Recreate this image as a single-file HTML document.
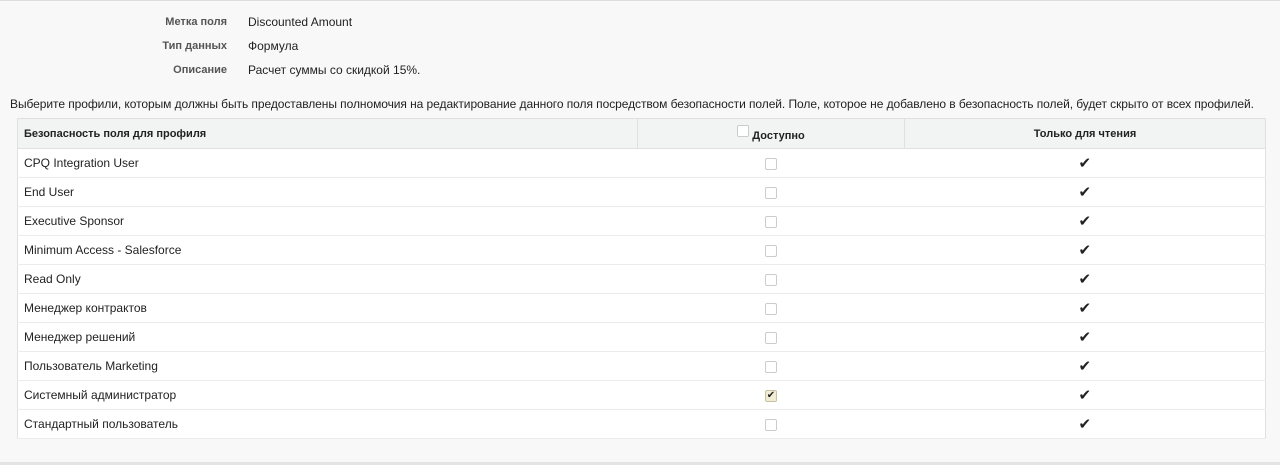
<!DOCTYPE html>
<html><head><meta charset="utf-8"><style>
body{margin:0;width:1280px;height:465px;background:#f8f8f8;font-family:"Liberation Sans",Arial,sans-serif;color:#222;position:relative;overflow:hidden}
.top{position:absolute;left:0;top:0;width:1280px;height:1px;background:#ddd}
.bot{position:absolute;left:0;top:462px;width:1280px;height:3px;background:#e4e4e4}
.lbl{position:absolute;width:227px;text-align:right;font-size:11px;font-weight:bold;color:#555}
.val{position:absolute;left:248px;font-size:12px;color:#222}
.desc{position:absolute;left:10px;top:97px;font-size:12px;letter-spacing:-0.065px;color:#222;white-space:nowrap}
table{position:absolute;left:17px;top:118px;width:1249px;border-collapse:collapse;background:#fff;border:1px solid #e0e0e0}
th{background:#f2f3f3;height:29px;font-size:11px;font-weight:bold;text-align:left;padding:0 0 0 6px;border-bottom:1px solid #e0e0e0}
th+th{border-left:1px solid #e0e0e0;text-align:center;padding:0}
td{height:28px;border-bottom:1px solid #ececec;font-size:12px;padding:0 0 0 6px}
td+td{text-align:center;padding:0}
.cb{display:inline-block;width:10px;height:10px;border:1px solid #ccc;border-radius:2px;vertical-align:middle;background:#fff}
.cb.on{background:#f1ecd6;border-color:#c9c2a0;font-size:10px;line-height:10px;text-align:center}
.ck{font-size:15px;vertical-align:middle}
</style></head><body>
<div class="top"></div>
<div class="lbl" style="top:16px">Метка поля</div><div class="val" style="top:15px">Discounted Amount</div>
<div class="lbl" style="top:40px">Тип данных</div><div class="val" style="top:39px">Формула</div>
<div class="lbl" style="top:64px">Описание</div><div class="val" style="top:63px">Расчет суммы со скидкой 15%.</div>
<div class="desc">Выберите профили, которым должны быть предоставлены полномочия на редактирование данного поля посредством безопасности полей. Поле, которое не добавлено в безопасность полей, будет скрыто от всех профилей.</div>
<table>
<tr><th style="width:613px">Безопасность поля для профиля</th><th style="width:266px"><span style="position:relative;top:3px"><span class="cb" style="position:relative;top:-6px"></span> Доступно</span></th><th>Только для чтения</th></tr>
<tr><td>CPQ Integration User</td><td><span class="cb"></span></td><td><span class="ck">✔</span></td></tr>
<tr><td>End User</td><td><span class="cb"></span></td><td><span class="ck">✔</span></td></tr>
<tr><td>Executive Sponsor</td><td><span class="cb"></span></td><td><span class="ck">✔</span></td></tr>
<tr><td>Minimum Access - Salesforce</td><td><span class="cb"></span></td><td><span class="ck">✔</span></td></tr>
<tr><td>Read Only</td><td><span class="cb"></span></td><td><span class="ck">✔</span></td></tr>
<tr><td>Менеджер контрактов</td><td><span class="cb"></span></td><td><span class="ck">✔</span></td></tr>
<tr><td>Менеджер решений</td><td><span class="cb"></span></td><td><span class="ck">✔</span></td></tr>
<tr><td>Пользователь Marketing</td><td><span class="cb"></span></td><td><span class="ck">✔</span></td></tr>
<tr><td>Системный администратор</td><td><span class="cb on">✔</span></td><td><span class="ck">✔</span></td></tr>
<tr><td>Стандартный пользователь</td><td><span class="cb"></span></td><td><span class="ck">✔</span></td></tr>
</table>
<div class="bot"></div>
</body></html>
